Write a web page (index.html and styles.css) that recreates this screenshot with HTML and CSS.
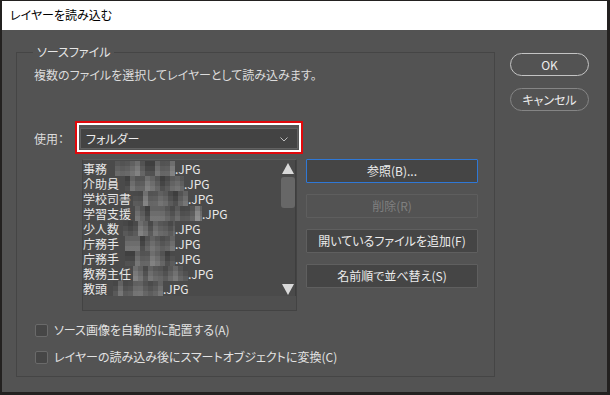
FILE: index.html
```html
<!DOCTYPE html>
<html lang="ja">
<head>
<meta charset="utf-8">
<title>レイヤーを読み込む</title>
<link rel="stylesheet" href="styles.css">
</head>
<body>
<div class="dialog">
  <div class="titlebar">レイヤーを読み込む</div>
  <div class="content">
    <div class="group">
      <span class="legend">ソースファイル</span>
      <div class="desc">複数のファイルを選択してレイヤーとして読み込みます。</div>
      <div class="use-row">
        <span class="use-label">使用：</span>
        <div class="hl-red">
          <div class="hl-white">
            <div class="select">
              <span>フォルダー</span>
              <svg class="chev" width="8" height="5" viewBox="0 0 8 5"><path d="M0.5 0.5 L4 4 L7.5 0.5" fill="none" stroke="#bdbdbd" stroke-width="1"/></svg>
            </div>
          </div>
        </div>
      </div>
      <div class="main-row">
        <div class="list">
          <div class="list-body">
            <div class="items">
              <div class="item"><span>事務</span><span class="mz m1"></span>.JPG</div>
              <div class="item"><span>介助員</span><span class="mz m2"></span>.JPG</div>
              <div class="item"><span>学校司書</span><span class="mz m3"></span>.JPG</div>
              <div class="item"><span>学習支援</span><span class="mz m4"></span>.JPG</div>
              <div class="item"><span>少人数</span><span class="mz m5"></span>.JPG</div>
              <div class="item"><span>庁務手</span><span class="mz m6"></span>.JPG</div>
              <div class="item"><span>庁務手</span><span class="mz m7"></span>.JPG</div>
              <div class="item"><span>教務主任</span><span class="mz m8"></span>.JPG</div>
              <div class="item"><span>教頭</span><span class="mz m9"></span>.JPG</div>
            </div>
            <div class="vscroll">
              <svg class="arrow-up" width="12" height="11" viewBox="0 0 12 11"><polygon points="6,0 12,11 0,11" fill="#d9d9d9"/></svg>
              <div class="thumb"></div>
              <div class="vspacer"></div>
              <svg class="arrow-down" width="12" height="11" viewBox="0 0 12 11"><polygon points="0,0 12,0 6,11" fill="#d9d9d9"/></svg>
            </div>
          </div>
          <div class="hscroll"></div>
        </div>
        <div class="buttons">
          <div class="btn focus">参照(B)...</div>
          <div class="btn disabled">削除(R)</div>
          <div class="btn">開いているファイルを追加(F)</div>
          <div class="btn">名前順で並べ替え(S)</div>
        </div>
      </div>
      <div class="check first"><span class="box"></span><span>ソース画像を自動的に配置する(A)</span></div>
      <div class="check"><span class="box"></span><span>レイヤーの読み込み後にスマートオブジェクトに変換(C)</span></div>
    </div>
    <div class="side">
      <div class="pill ok">OK</div>
      <div class="pill cancel">キャンセル</div>
    </div>
  </div>
</div>
</body>
</html>
```
FILE: styles.css
```css
* { box-sizing: border-box; }
html, body {
  margin: 0;
  padding: 0;
}
body {
  width: 610px;
  height: 395px;
  overflow: hidden;
  background: #232120;
  font-family: "Noto Sans CJK JP", "Noto Sans", sans-serif;
  font-size: 12px;
  font-feature-settings: "palt";
  color: #e2e2e2;
}
.dialog {
  margin: 1px 3px 0 2px;
  width: 605px;
  height: 391px;
  background: #535353;
  display: flex;
  flex-direction: column;
}
.titlebar {
  height: 29px;
  background: #ffffff;
  color: #000;
  line-height: 28px;
  padding-left: 8px;
  flex: none;
}
.content {
  display: flex;
  padding: 22px 0 0 14px;
}
.group {
  position: relative;
  width: 479px;
  height: 325px;
  border: 1px solid #454545;
  padding: 14px 0 0 17px;
  flex: none;
}
.legend {
  position: absolute;
  top: -9px;
  left: 16px;
  padding: 0 4px;
  background: #535353;
  line-height: 16px;
  color: #e6e6e6;
}
.desc {
  line-height: 16px;
  color: #dcdcdc;
}
.use-row {
  margin-top: 38px;
  display: flex;
  align-items: center;
  height: 33px;
}
.use-label {
  width: 41px;
  line-height: 16px;
  padding-top: 2px;
  color: #dcdcdc;
}
.hl-red {
  width: 228px;
  height: 33px;
  border: 2px solid #e0080b;
}
.hl-white {
  height: 100%;
  border: 2px solid #ffffff;
  padding: 3px 1px 1px 1px;
  background: #535353;
}
.select {
  height: 21px;
  border: 1px solid #616161;
  background: #434343;
  display: flex;
  align-items: center;
  justify-content: space-between;
  padding: 0 9px 0 5px;
  line-height: 16px;
  color: #ececec;
}
.chev { display: block; margin-top: 1px; }
.main-row {
  display: flex;
  margin-top: 5px;
}
.list {
  margin-left: 48px;
  width: 215px;
  height: 152px;
  border: 1px solid #434343;
  border-top-color: #5c5c5c;
  display: flex;
  flex-direction: column;
  background: #4f4f4f;
}
.list-body {
  height: 136px;
  flex: none;
  display: flex;
  background: #4a4a4a;
}
.items {
  flex: 1;
  padding-top: 1px;
  overflow: hidden;
}
.item {
  height: 15px;
  line-height: 15px;
  white-space: nowrap;
  color: #e8e8e8;
  display: flex;
}
.mz {
  display: inline-block;
  height: 15px;
  flex: none;
  background-color: #5c5c5c;
  background-image:
    linear-gradient(180deg, rgba(0,0,0,.10) 0 5px, transparent 5px 10px, rgba(255,255,255,.06) 10px 15px),
    linear-gradient(90deg, rgba(255,255,255,.10) 0 5px, transparent 5px 10px, rgba(0,0,0,.12) 10px 15px, transparent 15px),
    linear-gradient(90deg, rgba(0,0,0,.14) 0 5px, transparent 5px 15px, rgba(255,255,255,.09) 15px 25px, transparent 25px),
    linear-gradient(90deg, transparent 0 10px, rgba(255,255,255,.10) 10px 15px, transparent 15px 30px, rgba(0,0,0,.12) 30px 40px, transparent 40px);
  background-size: 100% 15px, 20px 5px, 35px 10px, 45px 15px;
  background-repeat: no-repeat, repeat, repeat, repeat;
  background-position: 0 0, 0 0, 0 5px, 0 0;
}
.m1 { margin-left: 8px; width: 60px; }
.m2 { margin-left: 6px; width: 59px; background-position: 0 0, 5px 0, 0 0, 10px 0; }
.m3 { margin-left: 2px; width: 55px; background-position: 0 0, 10px 5px, 5px 5px, 0 0; }
.m4 { margin-left: 4px; width: 67px; background-position: 0 0, 0 10px, 10px 0, 5px 0; }
.m5 { margin-left: 4px; width: 52px; background-position: 0 0, 15px 0, 0 5px, 20px 0; }
.m6 { margin-left: 6px; width: 50px; background-position: 0 0, 5px 5px, 15px 0, 0 0; }
.m7 { margin-left: 6px; width: 50px; background-position: 0 0, 10px 0, 5px 5px, 15px 0; }
.m8 { margin-left: 2px; width: 55px; background-position: 0 0, 0 5px, 20px 0, 5px 0; }
.m9 { margin-left: 6px; width: 50px; background-position: 0 0, 5px 0, 0 0, 25px 0; }
.vscroll {
  width: 16px;
  flex: none;
  display: flex;
  flex-direction: column;
  align-items: center;
  padding: 3px 0 1px 0;
  border-right: 1px solid #3e3e3e;
}
.arrow-up, .arrow-down { display: block; flex: none; }
.thumb {
  margin-top: 3px;
  width: 14px;
  height: 31px;
  border-radius: 3px;
  background: #676767;
  flex: none;
}
.vspacer { flex: 1; }
.hscroll { flex: 1; }
.buttons {
  margin-left: 9px;
  display: flex;
  flex-direction: column;
  gap: 11px;
}
.btn {
  width: 172px;
  height: 24px;
  border: 1px solid #5f5f5f;
  border-radius: 1px;
  background: #454545;
  display: flex;
  align-items: center;
  justify-content: center;
  line-height: 16px;
  color: #ececec;
}
.btn.focus { border-color: #2f78d6; }
.btn.disabled {
  background: #535353;
  border-color: #5e5e5e;
  color: #808080;
}
.check {
  display: flex;
  align-items: center;
  height: 16px;
  line-height: 16px;
  margin-top: 11px;
  color: #e2e2e2;
}
.box {
  width: 13px;
  height: 13px;
  margin: 0 6px 0 1px;
  border: 1px solid #6a6a6a;
  border-radius: 2px;
  background: #464646;
  flex: none;
}
.side {
  margin-left: 15px;
  padding-top: 1px;
  display: flex;
  flex-direction: column;
  gap: 12px;
}
.pill {
  width: 79px;
  height: 23px;
  border-radius: 12px;
  display: flex;
  align-items: center;
  justify-content: center;
  line-height: 16px;
  color: #ececec;
}
.pill.ok { border: 1.5px solid #c4c4c4; }
.pill.cancel { border: 1.5px solid #858585; }
```
